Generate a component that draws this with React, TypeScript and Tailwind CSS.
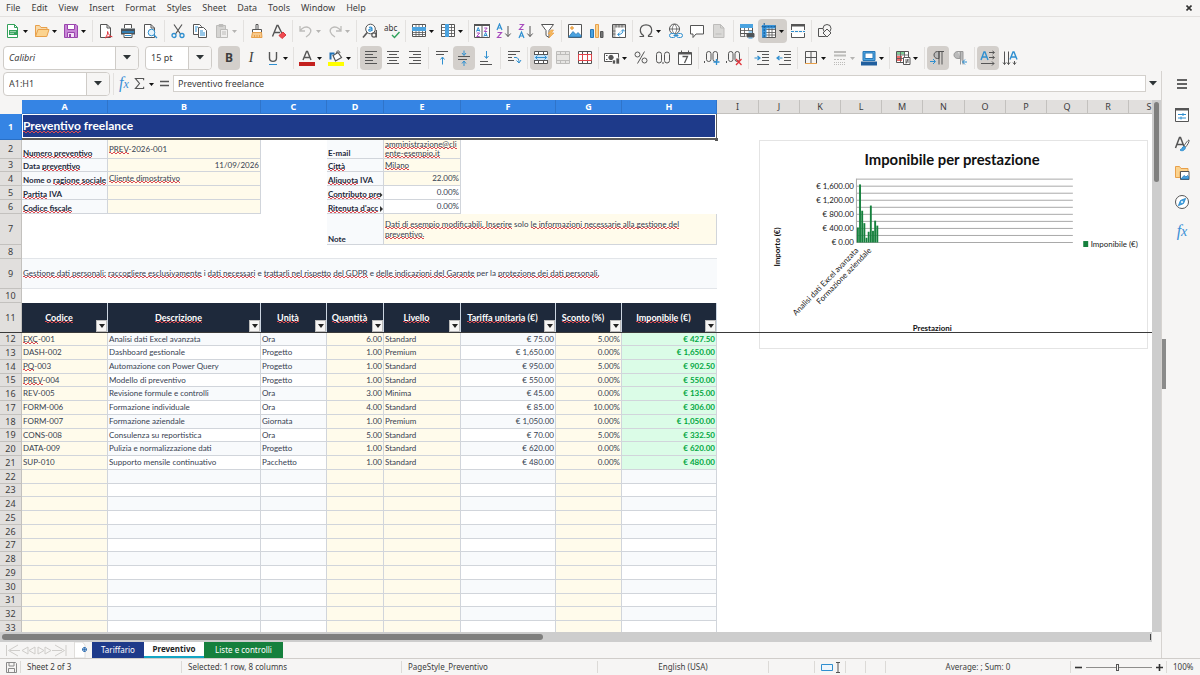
import React from "react";

type Kids = { children?: React.ReactNode };

const BLUE = "#2f8fd0";
const GRAY = "#555555";
const ORANGE = "#e8a04a";

function Ico({ children, dim }: Kids & { dim?: boolean }) {
  return (
    <svg width="16" height="16" viewBox="0 0 16 16" fill="none" stroke={dim ? "#bdbcba" : GRAY} strokeWidth="1" className="shrink-0" aria-hidden="true">
      {children}
    </svg>
  );
}

function Caret({ dim, big }: { dim?: boolean; big?: boolean }) {
  return big ? (
    <svg width="8" height="5" viewBox="0 0 8 5" aria-hidden="true"><path d="M0 0h8L4 4.6z" fill="#2e3436" /></svg>
  ) : (
    <svg width="5" height="3" viewBox="0 0 5 3" className="mt-0.5" aria-hidden="true"><path d="M0 0h5L2.5 3z" fill={dim ? "#b5b4b2" : "#111"} /></svg>
  );
}

function Btn({ label, children, active, split, dim }: Kids & { label: string; active?: boolean; split?: boolean; dim?: boolean }) {
  return (
    <button
      type="button"
      aria-label={label}
      aria-pressed={active}
      className={`flex h-6 shrink-0 items-center rounded ${split ? "w-[29px] gap-0.5 pl-[3px]" : "w-[22px] justify-center"} ${active ? "bg-[#d3cfcb]" : ""}`}
    >
      {children}
      {split && <Caret dim={dim} />}
    </button>
  );
}

function Sep({ wide }: { wide?: boolean }) {
  return (
    <span className={`flex h-[22px] shrink-0 justify-center ${wide ? "w-1.5" : "w-[5px]"}`}>
      <span className="w-px bg-[#e3e1df]" />
    </span>
  );
}

const docPath = "M2.5 1.5h6.5l3.5 3.5v9.5h-10z";

const icons = {
  newDoc: <Ico><path d="M2.5 1.5h7l3 3v10h-10z" fill="#fff" stroke="#33a15a" /><path d="M9.5 1.5v3h3" stroke="#33a15a" /><path d="M4 7h8v5H4z" fill="#33a15a" stroke="none" /><path d="M5 8.600h6M5 10.400h4" stroke="#d4f0dc" strokeWidth=".7" /></Ico>,
  open: <Ico><path d="M1.500 13.500v-11h4l1.500 2h6v2" fill="#f8d9a8" stroke={ORANGE} /><path d="M1.500 13.500 4 6.500h11l-2.200 7z" fill="#fbd38f" stroke={ORANGE} /></Ico>,
  save: <Ico><path d="M1.500 1.500h11.500l1.500 1.500v11.500h-13z" fill="#c886d6" stroke="#9a45ad" /><path d="M4.500 1.500h7v5h-7z" fill="#fff" stroke="#9a45ad" /><path d="M4.500 14.500v-5h7v5z" fill="#f4e2f7" stroke="#9a45ad" /><path d="M6 11h2v3H6z" fill="#9a45ad" stroke="none" /></Ico>,
  pdf: <Ico><path d={docPath} fill="#fff" /><path d="M9 1.500v3.500h3.500" /><path d="M7 15c2-2 3-4.500 2.600-6.500.4 2.600 2.200 4.700 4.600 5.200-2.400-.6-5 0-7.200 1.300z" stroke="#e0343c" /></Ico>,
  print: <Ico><path d="M4.500 5V1.500h7V5" fill="#fff" /><path d="M1 5.500h14v6H1z" fill="#4a5258" stroke="none" /><path d="M2 9h12" stroke={BLUE} strokeWidth="1.500" /><path d="M4 10.500h8v4H4z" fill="#fff" /><path d="M5 12.500h6" stroke={BLUE} /></Ico>,
  preview: <Ico><path d={docPath} fill="#fff" /><path d="M9 1.500v3.500h3.500" /><circle cx="9.500" cy="9.500" r="3.300" fill="#e6f3fb" stroke={BLUE} /><path d="m12 12 3 3" stroke={BLUE} strokeWidth="1.300" /></Ico>,
  cut: <Ico><path d="M4 1.500 10.500 11M12 1.500 5.500 11" strokeWidth="1.200" /><circle cx="4" cy="12.500" r="2" stroke={BLUE} strokeWidth="1.300" /><circle cx="12" cy="12.500" r="2" stroke={BLUE} strokeWidth="1.300" /></Ico>,
  copy: <Ico><path d="M1.500 1.500h6l2 2v8h-8z" fill="#fff" /><path d="M6.500 4.500h5l3 3v7h-8z" fill="#fff" /><path d="M3 4h3M3 6h2M3 8h2" stroke={BLUE} /><path d="M8 8h3M8 10h5M8 12h5" stroke={BLUE} /></Ico>,
  paste: <Ico dim><path d="M2.500 2.500h9v12h-9z" fill="#d5d4d2" /><path d="M5 1.500h4v2H5z" fill="#bdbcba" /><path d="M6.500 6.500h7v8h-7z" fill="#efeeed" /><path d="M8 9h4M8 11h4" /></Ico>,
  brush: <Ico><path d="M7 1.500h2v5H7z" fill="#fff" /><path d="M3.500 6.500h9v3h-9z" fill="#fff" /><path d="M3.500 9.500h9l.5 5H2.500z" fill="#f7c98b" stroke={ORANGE} /><path d="M5.500 12v2.500M8 12v2.500M10.500 12v2.500" stroke={ORANGE} /></Ico>,
  clear: <Ico><path d="M1.500 13.500 6 2.500h1l4 8M3 9.500h6" strokeWidth="1.400" /><path d="m8 12.500 4-3.500 3 3-4 3.500z" fill="#ef4a50" stroke="#d9383e" /></Ico>,
  undo: <Ico dim><path d="M2 3v5h5M2.300 7.800C4 4.500 8 3 11 4.800c3 2 2.500 5.700-3 9.200" strokeWidth="1.300" /></Ico>,
  redo: <Ico dim><path d="M14 3v5H9M13.700 7.800C12 4.500 8 3 5 4.800c-3 2-2.500 5.700 3 9.200" strokeWidth="1.300" /></Ico>,
  find: <Ico><circle cx="8.500" cy="6" r="4.800" fill="#fff" /><path d="M5.200 9.500 1 14.500" strokeWidth="1.600" /><path d="M7 4.500c2-1 3 0 3 1v2.500M10 6c-3-.2-3.500.8-3.200 1.500.5.900 2.200.8 3.200-.5" stroke={BLUE} strokeWidth="1.200" /><circle cx="12" cy="12" r="2.200" fill="#f6f5f4" strokeWidth="1.200" /><path d="M14.300 7v7.500" strokeWidth="1.300" /></Ico>,
  spell: <Ico><text x="0" y="7.500" fontSize="8" fontFamily="Noto Sans" fill="#333" stroke="none">abc</text><path d="m8 12 2.500 2.500 5-5.500" stroke="#2fa25b" strokeWidth="1.400" /></Ico>,
  rows: <Ico><path d="M1.500 1.500h13v12h-13z" fill="#fff" /><path d="M5 1.500v12M8 1.500v12M11.500 1.500v12M1.500 9.500h13M1.500 11.500h13" strokeWidth=".8" /><path d="M1 4h14v4H1z" fill="#4ba3e0" stroke="none" /></Ico>,
  cols: <Ico><path d="M1.500 1.500h13v12h-13z" fill="#fff" /><path d="M1.500 4.500h13M1.500 7.500h13M1.500 10.500h13M11.500 1.500v12" strokeWidth=".8" /><path d="M5 1h4v13H5z" fill="#4ba3e0" stroke="none" /></Ico>,
  sort: <Ico><path d="M.5 1.500h15v13H.5z" fill="#fff" /><path d="M0 1h16v2H0z" fill="#555" stroke="none" /><path d="M8 2v12" /><path d="m2.500 8.500 1.700-4 1.700 4M3 7.500h2.500M9.900 13.500l1.700-4 1.700 4M10.400 12.500h2.500" stroke={BLUE} /><path d="M2.700 10h3l-3 3.500h3M10.200 5h3l-3 3.500h3" stroke="#a74bbd" /></Ico>,
  az: <Ico><path d="m1 7 2.500-6L6 7M2 5h3" stroke={BLUE} strokeWidth="1.200" /><path d="M1.500 9.500h4l-4 5h4" stroke="#a74bbd" strokeWidth="1.200" /><path d="M12 3v10.500M9.300 10.500 12 13.500l2.700-3" /></Ico>,
  za: <Ico><path d="m1 15 2.500-6L6 15M2 13h3" stroke={BLUE} strokeWidth="1.200" /><path d="M1.500 1.500h4l-4 5h4" stroke="#a74bbd" strokeWidth="1.200" /><path d="M12 3v10.500M9.300 10.500 12 13.500l2.700-3" /></Ico>,
  filter: <Ico><path d="M1.500 1.500h12l-4.500 6v7l-3-2v-5z" fill="#fff" /><path d="m11 7-3 4h2.500L9 15l5-5h-2.500l2-3z" fill="#f7b95c" stroke={ORANGE} strokeWidth=".7" /></Ico>,
  image: <Ico><path d="M1.500 1.500h13v13h-13z" fill="#fff" /><path d="m2 13.500 4-5 3 3 2-2 3 3v1.500H2z" fill="#4ba3e0" stroke="#2878b8" strokeWidth=".8" /><circle cx="5" cy="5" r="1.300" fill="#f7b95c" stroke={ORANGE} /></Ico>,
  chart: <Ico><path d="M1.500 6.500h3v8h-3z" fill="#4ba3e0" stroke="#2878b8" /><path d="M6.500 1.500h3v13h-3z" fill="#fbd38f" stroke={ORANGE} /><path d="M11.500 8.500h2.500v6h-2.500z" fill="#777" /></Ico>,
  pivot: <Ico><path d="M1.500 1.500h13v13h-13z" fill="#fff" /><path d="M2 2h12v2.500H4.500V14H2z" fill="#b9b8b6" stroke="none" /><path d="M5 2v2.500M8 2v2.500M11 2v2.500M2 8h2.500M2 11h2.500" stroke="#555" strokeWidth=".8" /><path d="M7 11.500c3.500 0 5-1.500 5-4.500M10 8.500 12 6.500l2 2M8.700 9.500l-2 2 2 2" stroke={BLUE} /></Ico>,
  omega: <Ico><path d="M1.500 13.500h4v-1C3 11 2.300 9 2.300 7.200 2.300 4 4.500 1.800 8 1.800s5.700 2.200 5.700 5.400c0 1.800-.7 3.800-3.200 5.300v1h4" strokeWidth="1.200" /></Ico>,
  link: <Ico><circle cx="7.500" cy="6" r="5" fill="#fff" /><path d="M2.500 6h10M7.500 1c-3 3-3 7 0 10M7.500 1c3 3 3 7 0 10" strokeWidth=".8" /><rect x="2.500" y="10.500" width="6" height="4" rx="2" stroke={BLUE} fill="#f6f5f4" /><rect x="9.500" y="10.500" width="6" height="4" rx="2" stroke={BLUE} fill="#f6f5f4" /><path d="M6.500 12.500h5" stroke={BLUE} /></Ico>,
  comment: <Ico><path d="M1.500 2.500h13v8.500H7l-3 3.500V11H1.500z" fill="#fff" /></Ico>,
  doc: <Ico dim><path d="M2.500 1.500h7l3.500 3.500v9.500H2.500z" fill="#d9d8d6" /><path d="M9.500 1.500v3.500H13M4.500 11h6" /></Ico>,
  headers: <Ico><path d="M1.500 1.500h12v9h-12z" fill="#fff" /><path d="M1.500 7.500h12M5.500 1.500v12M9.500 1.500v6M1.500 10v3.500h5" strokeWidth=".8" /><path d="M1 1h13v4H1z" fill="#4ba3e0" stroke="none" /><path d="M8 10.500h7v3.500H8z" fill="#4a5258" /><path d="M9.500 9h4M9.500 15h4" stroke={BLUE} /></Ico>,
  freeze: <Ico><path d="M1.500 2.500h13v12h-13z" fill="#fff" /><path d="M1.500 6.500h13M1.500 9.500h13M1.500 12h13M8 2.500v12M11 2.500v12" strokeWidth=".8" /><path d="M1 2h4.500v12.500H1z" fill="#3b94d9" stroke="none" /><path d="M1 2h13.500v3.500H1z" fill="#3b94d9" stroke="none" /><path d="M3.200 0v15M.5 3.700h14" stroke="#175a94" strokeDasharray="2 1" /></Ico>,
  splitWin: <Ico><path d="M1.500 1.500h13v13h-13z" fill="#fff" /><path d="M1 1h14v2.500H1z" fill="#555" stroke="none" /><path d="M0 8.500h16" stroke="#f6f5f4" strokeWidth="3" /><path d="M1 8.500h14" stroke={BLUE} strokeDasharray="3 1" /></Ico>,
  shapes: <Ico><path d="M1.500 5.500h7v8h-7z" fill="#f6f5f4" /><circle cx="10" cy="5.500" r="4" fill="#f6f5f4" /><path d="m10 6 4 4-4 4-4-4z" fill="#f6f5f4" /></Ico>,
  underline: <Ico><path d="M4.500 2v6c0 4.500 7 4.500 7 0V2" strokeWidth="1.400" /><path d="M4 14.500h8" stroke={BLUE} /></Ico>,
  fontColor: <Ico><path d="M4 10 7.500 1.500h1L12 10M5.500 7.500h5" strokeWidth="1.400" /><path d="M0 12h16v4H0z" fill="#c4211f" stroke="none" /></Ico>,
  highlight: <Ico><path d="M0 12h16v4H0z" fill="#ffff00" stroke="none" /><path d="m5 5.500 5-3 3.500 5-6 3.500z" fill="#fff" strokeWidth="1.200" /><path d="M8.500 4c-.5-4 3-4 3.500-1" /><path d="M2.500 9.500v-6h4" stroke="#2272b5" strokeWidth="2" /></Ico>,
  alignL: <Ico><path d="M2 1.500h12M2 4.500h8M2 7.500h12M2 10.500h8M2 13.500h12" /></Ico>,
  alignC: <Ico><path d="M2 1.500h12M4 4.500h8M2 7.500h12M4 10.500h8M2 13.500h12" /></Ico>,
  alignR: <Ico><path d="M2 1.500h12M6 4.500h8M2 7.500h12M6 10.500h8M2 13.500h12" /></Ico>,
  vTop: <Ico><path d="M2 1.500h12M2 4.500h8" /><path d="M8.500 14.500v-7M6.500 9.500l2-2.500 2 2.500" stroke={BLUE} /></Ico>,
  vMid: <Ico><path d="M2 6.500h12M2 9.500h9" /><path d="M8 .5V5M6 3l2 2.500L10 3M8 16v-4.500M6 13.500 8 11l2 2.500" stroke={BLUE} /></Ico>,
  vBot: <Ico><path d="M2 11.500h8M2 14.500h12" /><path d="M8.500 1v7M6.500 6l2 2.500 2-2.500" stroke={BLUE} /></Ico>,
  wrap: <Ico><path d="M2 1.500h12M2 4.500h8M2 7.500h4M2 10.500h6" /><path d="M8 7.500h2c2 0 3 2 3 5M10.500 10.500 13 13l2-3" stroke={BLUE} /></Ico>,
  merge: <Ico><path d="M1.500 1.500h13v12h-13z" fill="#fff" /><path d="M1.500 4.500h13M1.500 10.500h13M5.500 1.500v3M10.500 1.500v3M5.500 10.500v3M10.500 10.500v3" /><path d="M1 5h14v5H1z" fill="#c5e2f7" stroke="none" /><path d="M2.500 7.500h11M4.500 5.500l-2 2 2 2M11.500 5.500l2 2-2 2" stroke={BLUE} /></Ico>,
  mergeDim: <Ico dim><path d="M1.500 1.500h13v12h-13z" fill="#e6e5e3" /><path d="M1.500 4.500h13M1.500 10.500h13M5.500 1.500v3M10.500 1.500v3M5.500 10.500v3M10.500 10.500v3" /></Ico>,
  unmerge: <Ico><path d="M1.500 1.500h13v12h-13z" fill="#fff" /><path d="M1.500 4.500h13M1.500 10.500h13M5.500 1.500v3M10.500 1.500v3M5.500 10.500v3M10.500 10.500v3" /><path d="M1.500 4.500h13v6h-13zM5.500 4.500v6M10.500 4.500v6" stroke="#e0444a" /></Ico>,
  currency: <Ico><path d="M.5 3.500h14v8H.5z" fill="#fff" /><circle cx="7" cy="7.500" r="2.200" fill="#555" /><path d="M2 5.500h1.500M2 9.500h1.500" /><path d="M8.500 10h3v4h-3zM12 8h3.500v6H12z" fill="#555" stroke="#f6f5f4" strokeWidth=".7" /></Ico>,
  percent: <Ico><circle cx="4.500" cy="4.500" r="2.500" /><circle cx="11.500" cy="10.500" r="2.500" /><path d="M11.500 1.500 4.500 13.500" /></Ico>,
  number: <Ico><rect x="1.500" y="2" width="5" height="11" rx="2.500" /><rect x="9.500" y="2" width="5" height="11" rx="2.500" /><path d="M8 12v2" /></Ico>,
  date: <Ico><path d="M1.500 2.500h13v12h-13z" fill="#fff" /><path d="M1.500 3.500h13" strokeWidth="2" /><path d="M4.500 .5v3M11.500 .5v3" /><path d="M5.500 6.500h5l-3 6.500" strokeWidth="1.300" /></Ico>,
  addDec: <Ico><rect x="2.500" y="1.500" width="4.500" height="10" rx="2.200" /><rect x="9" y="1.500" width="4.500" height="10" rx="2.200" /><path d="M.5 11v2" /><path d="M12.500 9v6M9.500 12h6" stroke={BLUE} strokeWidth="1.300" /></Ico>,
  delDec: <Ico><rect x="2.500" y="1.500" width="4.500" height="10" rx="2.200" /><rect x="9" y="1.500" width="4.500" height="10" rx="2.200" /><path d="M.5 11v2" /><path d="m10 9 5.500 6M15.500 9 10 15" stroke="#e0343c" strokeWidth="1.300" /></Ico>,
  indent: <Ico><path d="M3 1.500h12M8 4.500h7M8 7.500h7M8 10.500h7M3 14.500h12" /><path d="M.5 8h5M3.500 6l2.500 2-2.500 2" stroke={BLUE} strokeWidth="1.200" /></Ico>,
  outdent: <Ico><path d="M3 1.500h12M8 4.500h7M8 7.500h7M8 10.500h7M3 14.500h12" /><path d="M1 8h5.500M3.500 6 1 8l2.500 2" stroke={BLUE} strokeWidth="1.200" /></Ico>,
  borders: <Ico><path d="M2.500 1.500h11v12h-11zM8 1.500v12M2.500 7.500h11" /><path d="M2 13.500h12" stroke={ORANGE} /></Ico>,
  lineStyle: <Ico dim><path d="M2 2h12" strokeWidth="2" /><path d="M2 5.500h12" strokeWidth="2" /><path d="M2 9.500h12" strokeDasharray="2 1" /><path d="M2 12.500h12M2 14.500h12" strokeDasharray="1 1" /></Ico>,
  lineColor: <Ico><path d="M2 1.500h12v9H2z" fill="#4ba3e0" stroke="#2878b8" /><path d="M4 3h8v5.500H4z" fill="#fff" stroke="#2878b8" /><path d="M0 11.500h16v4H0z" fill="#215f9e" stroke="none" /></Ico>,
  cond: <Ico><path d="M1.500 1.500h12v11h-12z" fill="#fff" /><path d="M2 2h8v2.500H2z" fill="#7ecb95" stroke="none" /><path d="M2 6h5v5H2z" fill="#ef6a6a" stroke="none" /><path d="M1.500 5h12M1.500 8.500h12M5.500 1.500v11M9.500 1.500v11" strokeWidth=".8" /><path d="M8.500 7.500h6.500v7H8.500z" fill="#fff" /><path d="M10 10h4M10 12h4M13 9l-2 4.500" strokeWidth=".9" /></Ico>,
  ltr: <Ico><path d="M9 1.500H7.500C5 1.500 4 3.500 4 5s1 3.500 3.500 3.500H9z" fill="#bbb" /><path d="M9 1.500v13M12 1.500v13M14 1.500H8" /><path d="M0 11.500h5M3 9l2.500 2.500L3 14" stroke={BLUE} /></Ico>,
  rtl: <Ico><path d="M6 1.500h5v13M8.500 1.500v13M6 1.500C3 1.500 2 3.500 2 5s1 3.500 4 3.500h2V1.500z" fill="#bbb" stroke="#999" /><path d="M11 12h4M13 9.500 10.500 12l2.500 2.500" stroke={BLUE} /></Ico>,
  textH: <Ico><path d="M1 10 4 2h1l3 8M2.200 7h4.600" stroke={BLUE} strokeWidth="1.400" /><path d="M9 2.500h5M12.500 1l2 1.500-2 1.500M9 7.500h5M12.500 6l2 1.500-2 1.500M1 13.500h13M12 11.500l2 2-2 2" /></Ico>,
  textV: <Ico><path d="M8 9.500 11 2h1l3 7.500M9.200 7h4.600" stroke={BLUE} strokeWidth="1.400" /><path d="M2.500 1.500v13M1 12.500l1.500 2 1.500-2M6.500 1.500v13M5 12.500l1.500 2 1.500-2M12.500 11v3.500M11 12.500l1.500 2 1.500-2" /></Ico>,
};

const menus = ["File", "Edit", "View", "Insert", "Format", "Styles", "Sheet", "Data", "Tools", "Window", "Help"];

function MenuBar() {
  return (
    <header className="flex h-[17px] shrink-0 items-center justify-between border-b border-[#e3e1df] pl-1.5 pr-2">
      <nav className="flex gap-[11px]">
        {menus.map((m) => (
          <button key={m} type="button" className="leading-3">{m}</button>
        ))}
      </nav>
      <button type="button" aria-label="Close document">
        <svg width="6" height="6" viewBox="0 0 6 6" stroke="#333" strokeWidth="1.600"><path d="m.5.5 5 5M5.500.5l-5 5" /></svg>
      </button>
    </header>
  );
}

function StandardBar() {
  return (
    <div role="toolbar" aria-label="Standard" className="flex h-[27px] shrink-0 items-center pl-0.5">
      <Btn label="New" split>{icons.newDoc}</Btn>
      <Btn label="Open" split>{icons.open}</Btn>
      <Btn label="Save" split>{icons.save}</Btn>
      <Sep wide />
      <Btn label="Export as PDF">{icons.pdf}</Btn>
      <Btn label="Print">{icons.print}</Btn>
      <Btn label="Print preview">{icons.preview}</Btn>
      <Sep wide />
      <Btn label="Cut">{icons.cut}</Btn>
      <Btn label="Copy">{icons.copy}</Btn>
      <Btn label="Paste" split dim>{icons.paste}</Btn>
      <Sep wide />
      <Btn label="Clone formatting">{icons.brush}</Btn>
      <Btn label="Clear formatting">{icons.clear}</Btn>
      <Sep />
      <Btn label="Undo" split dim>{icons.undo}</Btn>
      <Btn label="Redo" split dim>{icons.redo}</Btn>
      <Sep wide />
      <Btn label="Find and replace">{icons.find}</Btn>
      <Btn label="Spelling">{icons.spell}</Btn>
      <Sep />
      <Btn label="Row" split>{icons.rows}</Btn>
      <Btn label="Column" split>{icons.cols}</Btn>
      <Sep />
      <Btn label="Sort">{icons.sort}</Btn>
      <Btn label="Sort ascending">{icons.az}</Btn>
      <Btn label="Sort descending">{icons.za}</Btn>
      <Btn label="AutoFilter">{icons.filter}</Btn>
      <Sep />
      <Btn label="Insert image">{icons.image}</Btn>
      <Btn label="Insert chart">{icons.chart}</Btn>
      <Btn label="Pivot table">{icons.pivot}</Btn>
      <Sep />
      <Btn label="Special character" split>{icons.omega}</Btn>
      <Btn label="Hyperlink">{icons.link}</Btn>
      <Btn label="Comment">{icons.comment}</Btn>
      <Btn label="Headers and footers">{icons.doc}</Btn>
      <Sep wide />
      <Btn label="Print area">{icons.headers}</Btn>
      <Btn label="Freeze rows and columns" split active>{icons.freeze}</Btn>
      <Btn label="Split window">{icons.splitWin}</Btn>
      <Sep />
      <Btn label="Show draw functions">{icons.shapes}</Btn>
    </div>
  );
}

function Combo({ label, value, box, field }: { label: string; value: string; box: string; field: string }) {
  return (
    <div className={`flex h-6 shrink-0 overflow-hidden rounded border border-[#cfccc8] bg-white ${box}`}>
      <input aria-label={label} defaultValue={value} className={`min-w-0 flex-1 bg-transparent pl-[5px] outline-none ${field}`} />
      <button type="button" aria-label={`${label} list`} className="flex w-[23px] items-center justify-center border-l border-[#cfccc8] bg-[#f6f5f4]">
        <Caret big />
      </button>
    </div>
  );
}

function FormatBar() {
  return (
    <div role="toolbar" aria-label="Formatting" className="flex h-[27px] shrink-0 items-center pl-[3px]">
      <div className="mr-1.5 flex gap-1.5">
        <Combo label="Font name" value="Calibri" box="w-[136px]" field="italic" />
        <Combo label="Font size" value="15 pt" box="w-[67px]" field="" />
      </div>
      <Btn label="Bold" active><span className="text-xs font-bold leading-4 text-[#3d3d3d]">B</span></Btn>
      <Btn label="Italic"><span className="font-['Liberation_Serif',serif] text-sm italic leading-4">I</span></Btn>
      <Btn label="Underline" split>{icons.underline}</Btn>
      <Sep />
      <Btn label="Font color" split>{icons.fontColor}</Btn>
      <Btn label="Background color" split>{icons.highlight}</Btn>
      <Sep wide />
      <Btn label="Align left" active>{icons.alignL}</Btn>
      <Btn label="Center">{icons.alignC}</Btn>
      <Btn label="Align right">{icons.alignR}</Btn>
      <Sep />
      <Btn label="Align top">{icons.vTop}</Btn>
      <Btn label="Center vertically" active>{icons.vMid}</Btn>
      <Btn label="Align bottom">{icons.vBot}</Btn>
      <Sep wide />
      <Btn label="Wrap text">{icons.wrap}</Btn>
      <Sep />
      <Btn label="Merge and center" active>{icons.merge}</Btn>
      <Btn label="Merge cells">{icons.mergeDim}</Btn>
      <Btn label="Unmerge cells">{icons.unmerge}</Btn>
      <Sep />
      <Btn label="Currency" split>{icons.currency}</Btn>
      <Btn label="Percent">{icons.percent}</Btn>
      <Btn label="Number">{icons.number}</Btn>
      <Btn label="Date">{icons.date}</Btn>
      <Sep />
      <Btn label="Add decimal place">{icons.addDec}</Btn>
      <Btn label="Delete decimal place">{icons.delDec}</Btn>
      <Sep wide />
      <Btn label="Increase indent">{icons.indent}</Btn>
      <Btn label="Decrease indent">{icons.outdent}</Btn>
      <Sep />
      <Btn label="Borders" split>{icons.borders}</Btn>
      <Btn label="Border style" split dim>{icons.lineStyle}</Btn>
      <Btn label="Border color" split>{icons.lineColor}</Btn>
      <Sep />
      <Btn label="Conditional" split>{icons.cond}</Btn>
      <Sep wide />
      <Btn label="Left to right" active>{icons.ltr}</Btn>
      <Btn label="Right to left">{icons.rtl}</Btn>
      <Sep wide />
      <Btn label="Text direction horizontal" active>{icons.textH}</Btn>
      <Btn label="Text direction vertical">{icons.textV}</Btn>
    </div>
  );
}

function FormulaBar() {
  return (
    <div className="flex h-[29px] shrink-0 items-center pb-1 pl-[3px]">
      <Combo label="Name box" value="A1:H1" box="w-[107px]" field="" />
      <Sep wide />
      <button type="button" aria-label="Function wizard" className="w-4 font-['Liberation_Serif',serif] text-base italic leading-4 text-[#3a8fd6]">
        f<span className="text-xs">x</span>
      </button>
      <button type="button" aria-label="Select function" className="flex w-6 items-center gap-1 pl-0.5">
        <svg width="11" height="13" viewBox="0 0 12 14" fill="none" stroke={GRAY} strokeWidth="1.200" aria-hidden="true"><path d="M10.500 3.500v-2h-9L6 7l-4.500 5.500h9v-2" /></svg>
        <Caret />
      </button>
      <button type="button" aria-label="Formula" className="flex w-[17px] justify-center">
        <svg width="9" height="7" viewBox="0 0 9 7" stroke={GRAY} strokeWidth="1.500" aria-hidden="true"><path d="M0 1.500h9M0 5.500h9" /></svg>
      </button>
      <input aria-label="Input line" defaultValue="Preventivo freelance" className="h-[17px] min-w-0 flex-1 border border-[#d3d0cc] bg-white pl-1 outline-none" />
      <button type="button" aria-label="Expand formula bar" className="mr-0.5 flex w-[13px] justify-center"><Caret big /></button>
    </div>
  );
}

const squiggle =
  "bg-[linear-gradient(90deg,#dc4a52_50%,transparent_50%),linear-gradient(90deg,transparent_50%,#dc4a52_50%)] bg-[length:4px_1px,4px_1px] bg-[position:0_calc(100%-1px),0_100%] bg-repeat-x";

/* Words between tildes carry the spell-check squiggle. */
function Txt({ t }: { t: string }) {
  return (
    <>
      {t.split("~").map((part, i) =>
        i % 2 ? <span key={i} className={squiggle}>{part}</span> : <React.Fragment key={i}>{part}</React.Fragment>
      )}
    </>
  );
}

const columns = [
  { id: "A", w: "w-[86px]" }, { id: "B", w: "w-[153px]" }, { id: "C", w: "w-[66px]" }, { id: "D", w: "w-[57px]" },
  { id: "E", w: "w-[77px]" }, { id: "F", w: "w-[95px]" }, { id: "G", w: "w-[66px]" }, { id: "H", w: "w-[95px]" },
  { id: "I", w: "w-[42px]" }, { id: "J", w: "w-[41px]" }, { id: "K", w: "w-[41px]" }, { id: "L", w: "w-[41px]" },
  { id: "M", w: "w-[41px]" }, { id: "N", w: "w-[42px]" }, { id: "O", w: "w-[41px]" }, { id: "P", w: "w-[41px]" },
  { id: "Q", w: "w-[41px]" }, { id: "R", w: "w-[41px]" }, { id: "S", w: "w-[41px]" },
];

function RowHead({ n, on }: { n: number; on?: boolean }) {
  return (
    <th scope="row" className={`overflow-hidden border-b border-r p-0 text-center font-['Noto_Sans',sans-serif] text-[9px] leading-3 ${on ? "border-[#2a6fc4] bg-[#3584e4] font-bold text-white" : "border-[#c3c1be] bg-[#e1dfdd] font-normal text-[#3d3d3d]"}`}>
      {n}
    </th>
  );
}

const line = "border-r border-b border-[#d1d5db]";

function Label({ t, cut }: { t: string; cut?: boolean }) {
  return (
    <td className={`${line} overflow-hidden bg-slate-50 p-0 pl-px align-bottom font-bold text-[#1e293b]`}>
      <span className="flex items-center justify-between">
        <span><Txt t={t} /></span>
        {cut && <svg width="3" height="6" viewBox="0 0 3 6" aria-hidden="true"><path d="M0 0v6l3-3z" fill="#333" /></svg>}
      </span>
    </td>
  );
}

function Value({ t, right, plain, span }: { t: string; right?: boolean; plain?: boolean; span?: number }) {
  return (
    <td colSpan={span} className={`${line} overflow-hidden p-0 align-middle ${right ? "text-right" : ""} ${plain ? "bg-white" : "bg-amber-50"} ${span ? "whitespace-normal pl-px pr-7 leading-[10px]" : "px-px"}`}>
      <Txt t={t} />
    </td>
  );
}

const info = [
  { n: 3, h: "h-[13px]", a: "Data ~preventivo~", b: "11/09/2026", bRight: true, d: "~Città~", e: "~Milano~" },
  { n: 4, h: "h-[14px]", a: "Nome o ~ragione sociale~", b: "~Cliente dimostrativo~", d: "~Aliquota~ IVA", e: "22.00%", eRight: true },
  { n: 5, h: "h-[14px]", a: "~Partita~ IVA", b: "", d: "~Contributo pre~", cut: true, e: "0.00%", eRight: true, ePlain: true },
  { n: 6, h: "h-[14px]", a: "~Codice fiscale~", b: "", d: "~Ritenuta d'acc~", cut: true, e: "0.00%", eRight: true, ePlain: true },
];

const heads = ["~Codice~", "~Descrizione~", "~Unità~", "~Quantità~", "~Livello~", "~Tariffa unitaria~ (€)", "~Sconto~ (%)", "~Imponibile~ (€)"];

const items = [
  ["~EXC~-001", "Analisi dati Excel avanzata", "Ora", "6.00", "Standard", "€ 75.00", "5.00%", "€ 427.50"],
  ["DASH-002", "Dashboard gestionale", "Progetto", "1.00", "Premium", "€ 1,650.00", "0.00%", "€ 1,650.00"],
  ["~PQ~-003", "Automazione con Power Query", "Progetto", "1.00", "Standard", "€ 950.00", "5.00%", "€ 902.50"],
  ["~PREV~-004", "Modello di preventivo", "Progetto", "1.00", "Standard", "€ 550.00", "0.00%", "€ 550.00"],
  ["REV-005", "Revisione formule e controlli", "Ora", "3.00", "Minima", "€ 45.00", "0.00%", "€ 135.00"],
  ["FORM-006", "Formazione individuale", "Ora", "4.00", "Standard", "€ 85.00", "10.00%", "€ 306.00"],
  ["FORM-007", "Formazione aziendale", "Giornata", "1.00", "Premium", "€ 1,050.00", "0.00%", "€ 1,050.00"],
  ["CONS-008", "Consulenza su reportistica", "Ora", "5.00", "Standard", "€ 70.00", "5.00%", "€ 332.50"],
  ["DATA-009", "Pulizia e normalizzazione dati", "Progetto", "1.00", "Standard", "€ 620.00", "0.00%", "€ 620.00"],
  ["SUP-010", "Supporto mensile continuativo", "Pacchetto", "1.00", "Standard", "€ 480.00", "0.00%", "€ 480.00"],
];

const bodyRows = Array.from({ length: 22 }, (_, i) => ({ n: 12 + i, cells: items[i] ?? Array(8).fill("") }));

function cellTone(col: number, n: number, filled: boolean) {
  if (col === 7 && filled) return "bg-green-100 font-bold text-green-600";
  if (col === 0 || col === 3 || col === 4 || col === 6) return "bg-amber-50";
  return n % 2 ? "bg-white" : "bg-slate-50";
}

function Sheet() {
  return (
    <table className="w-px table-fixed border-separate border-spacing-0 whitespace-nowrap font-['Lato',sans-serif] text-[8px] leading-[9px] text-[#374151]">
      <colgroup>
        <col className="w-[22px]" />
        {columns.map((c) => <col key={c.id} className={c.w} />)}
      </colgroup>
      <thead>
        <tr className="h-[14px] font-['Noto_Sans',sans-serif]">
          <td className="bg-[#f6f5f4] p-0" />
          {columns.map((c, i) => (
            <th key={c.id} scope="col" className={`overflow-hidden border-b border-r p-0 text-center text-[9px] leading-3 ${i < 8 ? "border-[#2f74ca] bg-[#3584e4] font-bold text-white" : "border-[#c3c1be] bg-[#e1dfdd] font-normal text-[#3d3d3d]"}`}>
              {c.id}
            </th>
          ))}
        </tr>
      </thead>
      <tbody>
        <tr className="h-[26px]">
          <RowHead n={1} on />
          <td colSpan={8} className="relative border-b-2 border-r border-[#5c5c5c] bg-[#1e3a8a] p-0 pl-px align-middle text-xs font-bold leading-4 text-white shadow-[inset_0_0_0_1px_white]">
            <Txt t="~Preventivo~ freelance" />
            <span className="absolute -bottom-[3px] -right-0.5 size-[3px] bg-[#555]" />
          </td>
          <td colSpan={11} />
        </tr>
        <tr className="h-[19px]">
          <RowHead n={2} />
          <Label t="~Numero preventivo~" />
          <Value t="~PREV~-2026-001" />
          <td className="p-0" />
          <Label t="E-mail" />
          <td className={`${line} overflow-hidden bg-amber-50 p-0 pl-px align-middle`}>
            <Txt t="~amministrazione@cli~" /><br /><Txt t="~ente-esempio.it~" />
          </td>
        </tr>
        {info.map((r) => (
          <tr key={r.n} className={r.h}>
            <RowHead n={r.n} />
            <Label t={r.a} />
            <Value t={r.b} right={r.bRight} />
            <td className="p-0" />
            <Label t={r.d} cut={r.cut} />
            <Value t={r.e} right={r.eRight} plain={r.ePlain} />
          </tr>
        ))}
        <tr className="h-[31px]">
          <RowHead n={7} />
          <td colSpan={3} className="p-0" />
          <Label t="Note" />
          <Value span={4} t="~Dati di esempio modificabili. Inserire~ solo ~le informazioni necessarie alla gestione del preventivo.~" />
        </tr>
        <tr className="h-[14px]">
          <RowHead n={8} />
          <td colSpan={8} className="border-b border-[#e2e5e9] p-0" />
        </tr>
        <tr className="h-[30px]">
          <RowHead n={9} />
          <td colSpan={8} className="border-b border-[#e2e5e9] bg-slate-50 p-0 pl-px align-middle">
            <Txt t="~Gestione dati personali:~ ~raccogliere esclusivamente~ i ~dati necessari~ e ~trattarli nel rispetto~ ~del GDPR~ e ~delle indicazioni del Garante~ per la ~protezione dei dati personali.~" />
          </td>
        </tr>
        <tr className="h-[14px]">
          <RowHead n={10} />
          <td colSpan={8} className="p-0" />
        </tr>
        <tr className="h-[30px]">
          <RowHead n={11} />
          {heads.map((h) => (
            <td key={h} className="border-r border-[#cbd5e1] bg-[#1e293b] p-0 text-[9px] font-bold leading-3 text-white">
              <div className="flex h-[30px] items-center">
                <span className="flex-1 text-center"><Txt t={h} /></span>
                <button type="button" aria-label="Filter column" className="mb-px flex h-3 w-[11px] shrink-0 items-center justify-center self-end border border-[#bbb] bg-[#f6f5f4]">
                  <svg width="6" height="4" viewBox="0 0 6 4" aria-hidden="true"><path d="M0 0h6L3 4z" fill="#222" /></svg>
                </button>
              </div>
            </td>
          ))}
        </tr>
        {bodyRows.map((r, i) => (
          <tr key={r.n} className={i % 4 === 3 || i === 0 ? "h-[13px]" : "h-[14px]"}>
            <RowHead n={r.n} />
            {r.cells.map((c: string, j: number) => (
              <td key={j} className={`${line} overflow-hidden p-0 px-px align-middle ${j === 3 || j > 4 ? "text-right" : ""} ${cellTone(j, r.n, i < items.length)}`}>
                <Txt t={c} />
              </td>
            ))}
          </tr>
        ))}
      </tbody>
    </table>
  );
}

const bars = [427.5, 1650, 902.5, 550, 135, 306, 1050, 332.5, 620, 480];

function Chart() {
  return (
    <svg width="389" height="209" viewBox="0 0 389 209" className="absolute left-[759px] top-10 border border-[#e4e4e4] bg-white font-['Lato',sans-serif]" role="img" aria-label="Imponibile per prestazione">
      <text x="193" y="24" textAnchor="middle" fontSize="15" fontWeight="bold" fill="#111">Imponibile per prestazione</text>
      {Array.from({ length: 10 }, (_, i) => (
        <path key={i} d={`M96.500 ${38.5 + i * 7.11}H315`} stroke="#a8a8a8" />
      ))}
      <path d="M96.500 38v64.500" stroke="#a8a8a8" />
      {bars.map((v, i) => (
        <rect key={i} x={97 + i * 2.18} y={102.5 - (v / 1800) * 64} width="1.900" height={(v / 1800) * 64} fill="#15803d" />
      ))}
      <g fontSize="8" fill="#222">
        {["€ 1,600.00", "€ 1,200.00", "€ 800.00", "€ 400.00", "€ 0.00"].map((t, i) => (
          <text key={t} x="94" y={48 + i * 14.2} textAnchor="end">{t}</text>
        ))}
        <text transform="translate(99 111) rotate(-46)" textAnchor="end">Analisi dati Excel avanzata</text>
        <text transform="translate(112 111) rotate(-46)" textAnchor="end">Formazione aziendale</text>
        <text x="333" y="107">Imponibile (€)</text>
      </g>
      <g fontSize="8" fontWeight="bold" fill="#111">
        <text transform="translate(19 107) rotate(-90)" textAnchor="middle">Importo (€)</text>
        <text x="173" y="192" textAnchor="middle">Prestazioni</text>
      </g>
      <path d="M325.500 101h5v6h-5z" fill="#15803d" />
    </svg>
  );
}

function SheetArea() {
  return (
    <div className="flex min-h-0 flex-1">
      <div className="relative min-w-0 flex-1 overflow-hidden bg-white">
        <Sheet />
        <Chart />
        <div className="absolute inset-x-0 top-[232px] h-px bg-[#3a3a3a]" />
      </div>
      <div className="w-[9px] shrink-0 bg-[#cdcdcd] px-0.5 pt-0.5">
        <div className="h-20 rounded-full bg-[#7f7f7e]" />
      </div>
    </div>
  );
}

function TabBar() {
  return (
    <div className="flex h-4 shrink-0 items-stretch pl-1.5 text-[8px]">
      <button type="button" aria-label="Scroll tabs" className="flex w-[61px] items-center">
        <svg width="61" height="13" viewBox="0 0 61 13" fill="none" stroke="#cfcdca" aria-hidden="true">
          <path d="M.5 1v11M12 1 2.500 6.500 12 12M4 6.500h10M22 3l-6 3.500L22 10zM29 3l-6 3.500L29 10zM32 3l6 3.500L32 10zM39 3l6 3.500L39 10zM46 6.500h10M49 1l9.500 5.500L49 12M60 1v11" />
        </svg>
      </button>
      <button type="button" aria-label="Add sheet" className="mr-1 flex w-[21px] items-center pl-[7px]">
        <svg width="14" height="16" viewBox="0 0 14 16" fill="none" aria-hidden="true">
          <path d="M.5 0h8l2.500 3v13H.5z" fill="#fff" stroke="#e0dedb" />
          <circle cx="10.500" cy="7.500" r="2" fill="#fff" stroke="#2c6cb0" /><path d="M10.500 5v5M8 7.500h5" stroke="#2c6cb0" strokeWidth=".8" />
        </svg>
      </button>
      <button type="button" className="w-[52px] bg-[#1e3a8a] text-white">Tariffario</button>
      <button type="button" className="w-[60px] border-b-2 border-[#14a5c4] bg-white font-bold text-[#222]">Preventivo</button>
      <button type="button" className="w-[79px] bg-[#15803d] text-white">Liste e controlli</button>
    </div>
  );
}

function SideBar() {
  return (
    <aside className="flex w-[39px] shrink-0 border-l border-[#d6d3d0]">
      <button type="button" aria-label="Hide sidebar" className="mt-[268px] h-[50px] w-1 bg-[#8b8b8a]" />
      <div className="flex flex-1 flex-col items-center gap-[13px] pr-0.5 pt-[5px]">
        <button type="button" aria-label="Sidebar settings"><Ico><path d="M3 4h10M3 8h10M3 12h10" stroke="#333" strokeWidth="1.500" /></Ico></button>
        <button type="button" aria-label="Properties" className="mt-0.5"><Ico><path d="M1.500 1.500h13v13h-13z" fill="#fff" /><path d="M1 1h14v2.500H1z" fill="#555" stroke="none" /><path d="M4 7.500h8M4 11h8M9 6v3M7 9.500v3" stroke={BLUE} /></Ico></button>
        <button type="button" aria-label="Styles"><Ico><path d="M1.500 12 5.500 1.500h1l3.500 9M3 8.500h6" strokeWidth="1.500" /><path d="M15 4c-1 0-4 4-5 6l1.500 1c1.500-1.500 4-5 3.500-7z" fill="#fff" /><path d="M10 10.500c-2 0-1.500 3-4 3.500 2 1.500 5 .5 5.500-2.500z" fill="#4ba3e0" stroke={BLUE} /></Ico></button>
        <button type="button" aria-label="Gallery"><Ico><path d="M1.500 12.500v-11h4l1.500 2h7v3H6v6z" fill="#fbd38f" stroke={ORANGE} /><path d="M6.500 6.500h8.500v8H6.500z" fill="#fff" /><path d="m7 14 3-3.500 2 1.500 1.500-1.500 1 1V14z" fill="#4ba3e0" stroke="#2878b8" strokeWidth=".8" /></Ico></button>
        <button type="button" aria-label="Navigator"><Ico><circle cx="8" cy="8" r="6.500" fill="#fff" /><path d="m11.500 4.500-2 5-5 2 2-5z" fill="#4ba3e0" stroke={BLUE} /><circle cx="8" cy="8" r="1" fill="#fff" stroke="none" /></Ico></button>
        <button type="button" aria-label="Functions" className="h-4 font-['Liberation_Serif',serif] text-base italic leading-4 text-[#3a8fd6]">f<span className="text-sm leading-4">x</span></button>
      </div>
    </aside>
  );
}

function StatusCell({ children, box }: Kids & { box: string }) {
  return <div className={`my-0.5 flex items-center border-r border-[#dcdad7] ${box}`}>{children}</div>;
}

function StatusBar() {
  return (
    <footer className="flex h-[17px] shrink-0 items-stretch border-t border-[#d0cdca] text-[8px]">
      <StatusCell box="w-[21px] justify-center pl-0.5">
        <svg width="11" height="11" viewBox="0 0 11 11" fill="none" stroke="#8a8a8a" aria-hidden="true"><path d="M.5.5h9l1 1v9H.5zM3 .5v3.500h5V.5M2.500 10.500v-4h6v4" /></svg>
      </StatusCell>
      <StatusCell box="w-[161px] pl-1.5">Sheet 2 of 3</StatusCell>
      <StatusCell box="w-[220px] pl-1.5">Selected: 1 row, 8 columns</StatusCell>
      <StatusCell box="w-[196px] pl-1.5">PageStyle_Preventivo</StatusCell>
      <StatusCell box="w-[171px] justify-center">English (USA)</StatusCell>
      <StatusCell box="w-[46px]" />
      <StatusCell box="w-[31px] justify-center">
        <svg width="19" height="11" viewBox="0 0 19 11" fill="none" aria-hidden="true"><path d="M.5 2.500h11v6H.5z" fill="#eef6fc" stroke={BLUE} /><path d="M15 .5h4M15 10.500h4M17 .5v10" stroke="#555" /></svg>
      </StatusCell>
      <StatusCell box="w-5" />
      <StatusCell box="w-5" />
      <StatusCell box="flex-1 justify-center">Average: ; Sum: 0</StatusCell>
      <StatusCell box="w-24 justify-center gap-1">
        <button type="button" aria-label="Zoom out"><svg width="7" height="7" viewBox="0 0 7 7" stroke="#333" strokeWidth="1.600"><path d="M0 3.500h7" /></svg></button>
        <input
          type="range"
          aria-label="Zoom"
          defaultValue={48}
          className="h-2 w-[66px] appearance-none bg-[linear-gradient(#8f8e8c,#8f8e8c)] bg-[length:100%_1px] bg-center bg-no-repeat [&::-webkit-slider-thumb]:h-[7px] [&::-webkit-slider-thumb]:w-[3px] [&::-webkit-slider-thumb]:appearance-none [&::-webkit-slider-thumb]:border [&::-webkit-slider-thumb]:border-[#555] [&::-webkit-slider-thumb]:bg-[#f6f5f4]"
        />
        <button type="button" aria-label="Zoom in"><svg width="7" height="7" viewBox="0 0 7 7" stroke="#333" strokeWidth="1.600"><path d="M0 3.500h7M3.500 0v7" /></svg></button>
      </StatusCell>
      <div className="flex w-[33px] items-center pl-1.5">100%</div>
    </footer>
  );
}

export default function App() {
  return (
    <div className="flex h-screen flex-col overflow-hidden bg-[#f6f5f4] font-['Noto_Sans',sans-serif] text-[9px] leading-3 text-[#3d3d3d]">
      <MenuBar />
      <StandardBar />
      <FormatBar />
      <div className="flex min-h-0 flex-1">
        <main className="flex min-w-0 flex-1 flex-col">
          <FormulaBar />
          <SheetArea />
          <div className="mr-[9px] flex h-2.5 shrink-0 items-center bg-[#cdcdcd] pl-0.5">
            <div className="h-1.5 w-[47%] rounded-full bg-[#7f7f7e]" />
            <div className="ml-auto mr-px h-1.5 w-px bg-[#444]" />
          </div>
          <TabBar />
        </main>
        <SideBar />
      </div>
      <StatusBar />
    </div>
  );
}
